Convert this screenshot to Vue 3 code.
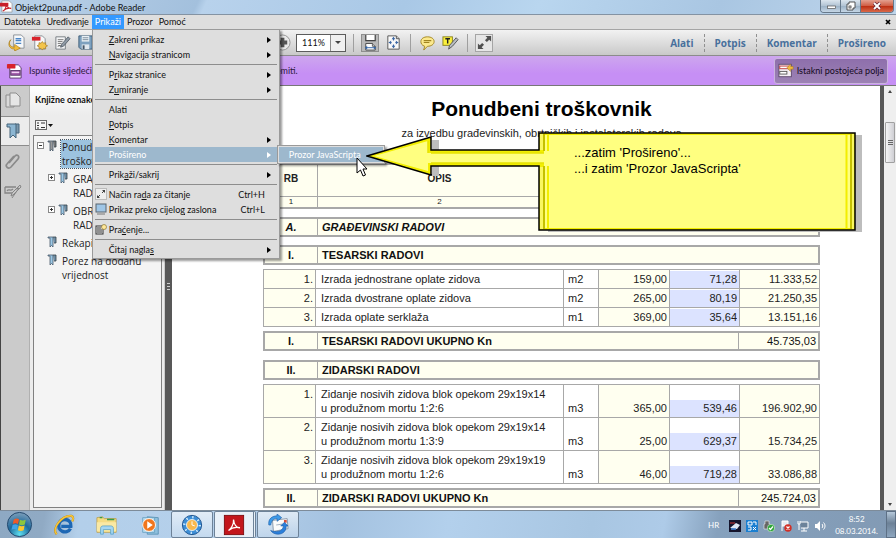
<template>
    <div class="window">
        <header class="titlebar">
            <svg class="title-icon" viewBox="0 0 14 14">
                <path d="M2 1h8l3 3v9H2z" fill="#fff" stroke="#999" stroke-width=".8" />
                <rect x="0" y="3" width="9" height="4" fill="#c8202a" />
                <path d="M3 12c3-2 4-5 3-8 1 4 3 5 6 5-4-1-7 1-9 3z" fill="none" stroke="#c8202a" stroke-width="1.2" />
            </svg>
            <h1 class="title-text">Objekt2puna.pdf - Adobe Reader</h1>
            <div class="window-buttons">
                <button class="win-btn" aria-label="Minimize">
                    <svg viewBox="0 0 12 10"><rect x="2.5" y="5" width="8" height="2.5" fill="#fff" stroke="#555" stroke-width=".7" /></svg>
                </button>
                <button class="win-btn" aria-label="Restore">
                    <svg viewBox="0 0 12 10"><path d="M4 1h6v6H8v2H2V3h2z" fill="#fff" stroke="#444" stroke-width=".9" /><rect x="4" y="5" width="2" height="2" fill="none" stroke="#444" stroke-width=".8" /></svg>
                </button>
                <button class="win-btn win-close" aria-label="Close">
                    <svg viewBox="0 0 12 10"><path d="M3 2l6 6M9 2l-6 6" stroke="#623" stroke-width="3.2" /><path d="M3 2l6 6M9 2l-6 6" stroke="#fff" stroke-width="1.9" /></svg>
                </button>
            </div>
        </header>

        <nav class="menubar">
            <div v-for="item in menus" :key="item" class="menubar-item">
                <button class="menubar-btn" :class="{ active: item === openMenu }" @click="openMenu = item">{{ item }}</button>
                <ul v-if="item === 'Prikaži' && openMenu === item" class="dropdown">
                    <li v-for="(entry, i) in viewMenu" :key="i" :class="{ 'menu-sep': !entry.label, 'menu-row': entry.label, selected: entry.selected }">
                        <template v-if="entry.label">
                            <svg v-if="entry.icon === 'read'" class="menu-icon" viewBox="0 0 12 12">
                                <rect x=".5" y=".5" width="11" height="11" fill="#eee" stroke="#bbb" />
                                <path d="M2 10V7l3 3zM10 2v3L7 2z" fill="#444" /><path d="M3 9l2-2M9 3L7 5" stroke="#444" />
                            </svg>
                            <svg v-else-if="entry.icon === 'screen'" class="menu-icon" viewBox="0 0 12 12">
                                <rect x="1" y="1" width="10" height="8" fill="#9fc6e6" stroke="#59646e" /><path d="M2 11h8" stroke="#777" />
                            </svg>
                            <svg v-else-if="entry.icon === 'track'" class="menu-icon" viewBox="0 0 12 12">
                                <rect x="1" y="3" width="7" height="8" fill="#eee" stroke="#333" /><path d="M2 5h4M2 7h5M2 9h5" stroke="#333" />
                                <circle cx="9" cy="4" r="2.5" fill="#ffe89a" stroke="#8a7430" stroke-width=".7" />
                            </svg>
                            <button class="menu-btn">
                                <span class="menu-label">{{ entry.label[0] }}<u>{{ entry.label[1] }}</u>{{ entry.label[2] }}</span>
                                <span v-if="entry.key" class="menu-key">{{ entry.key }}</span>
                                <span v-if="entry.sub" class="menu-arrow"></span>
                            </button>
                            <div v-if="entry.selected" class="submenu">
                                <button class="submenu-btn">Prozor JavaScripta</button>
                            </div>
                        </template>
                    </li>
                </ul>
            </div>
            <button class="doc-close" aria-label="Close document">
                <svg viewBox="0 0 6 6"><path d="M1 1l4 4M5 1L1 5" stroke="#000" stroke-width="1.7" /></svg>
            </button>
        </nav>

        <div class="toolbar">
            <div class="tools tools-file">
                <button class="tool" aria-label="Otvori">
                    <svg viewBox="0 0 18 18">
                        <path d="M6 1h8l3 3v11H6z" fill="#f6f8fa" stroke="#8a9097" />
                        <path d="M8 5h6M8 7h6M8 10h6" stroke="#4a86c8" stroke-width="1.4" />
                        <path d="M3 6c-3 4-1 8 4 8v-3l6 4-6 3v-2C1 16-1 10 3 6z" fill="#f2bd3c" stroke="#a87b16" stroke-width=".7" />
                    </svg>
                </button>
                <button class="tool" aria-label="Stvori PDF">
                    <svg viewBox="0 0 18 18">
                        <path d="M4 2h8l3 3v11H4z" fill="#f8f8f8" stroke="#8a9097" />
                        <rect x="1" y="3" width="9" height="4" fill="#d8232b" />
                        <path d="M12 8l1.300 1.800 2.200-.6v2.300l2 1-2 1v2.300l-2.200-.6L12 17l-1.300-1.800-2.200.6v-2.300l-2-1 2-1V9.200l2.200.6z" fill="#f4c54b" stroke="#a8802a" stroke-width=".8" />
                    </svg>
                </button>
                <button class="tool" aria-label="Potpiši">
                    <svg viewBox="0 0 18 18">
                        <path d="M2 3h10v13H2z" fill="#f4f5f6" stroke="#777d83" />
                        <path d="M4 6h6M4 8h5M4 10h4" stroke="#777" /><path d="M4 13c2-2 3 1 5-1" fill="none" stroke="#444" />
                        <path d="M15 3l2 2-7 8-3 1 1-3z" fill="#8f9aa5" stroke="#48525b" stroke-width=".8" />
                    </svg>
                </button>
                <button class="tool" aria-label="Spremi">
                    <svg viewBox="0 0 18 18">
                        <path d="M2 2h14v14H4l-2-2z" fill="#7da1bf" stroke="#3c5c78" />
                        <rect x="5" y="2" width="8" height="6" fill="#e9f0f5" /><path d="M6 4h6M6 6h6" stroke="#7a8c9c" />
                        <rect x="5" y="11" width="8" height="5" fill="#dfe7ee" /><rect x="6" y="12" width="2" height="4" fill="#456" />
                    </svg>
                </button>
            </div>
            <div class="tools tools-zoom">
                <button class="tool" aria-label="Povećaj">
                    <svg viewBox="0 0 18 18"><circle cx="9" cy="9" r="8" fill="#e8e8e8" stroke="#929292" /><path d="M9 4v10M4 9h10" stroke="#555" stroke-width="4" /></svg>
                </button>
                <div class="zoom-box">
                    <input class="zoom-input" v-model="zoom" aria-label="Zumiranje" />
                    <button class="zoom-drop" aria-label="Vrijednosti zumiranja"></button>
                </div>
            </div>
            <div class="tools tools-fit">
                <button class="tool pressed" aria-label="Prilagodi širini">
                    <svg viewBox="0 0 18 18">
                        <path d="M4 1v6h10V1" fill="#fff" stroke="#444" stroke-width="1.300" /><path d="M4 17V10h7l3 3v4z" fill="#fff" stroke="#444" />
                        <path d="M4 14.500h10" stroke="#3566a8" /><path d="M3 14.500l2.500-2v4zM15 14.500l-2.500-2v4z" fill="#3566a8" />
                        <path d="M11 10v3h3" fill="#ccc" stroke="#444" stroke-width=".8" />
                    </svg>
                </button>
                <button class="tool" aria-label="Cijela stranica">
                    <svg viewBox="0 0 18 18">
                        <path d="M3 2h9l3 3v11H3z" fill="#fafafa" stroke="#555" /><path d="M12 2v3h3" fill="#ccc" stroke="#555" />
                        <path d="M9 4v3M9 11v3M4 9h3M11 9h3" stroke="#3a66a4" stroke-width="1.200" />
                        <path d="M7 5.500h4L9 3zM7 12.500h4L9 15zM6.500 7v4L4 9zM11.500 7v4L14 9z" fill="#3a66a4" />
                    </svg>
                </button>
            </div>
            <div class="tools tools-note">
                <button class="tool" aria-label="Komentar">
                    <svg viewBox="0 0 18 18"><path d="M9 3c4 0 7 2 7 5s-3 5-7 5l-4 4 1-4c-3-1-4-3-4-5 0-3 3-5 7-5z" fill="#fbe98e" stroke="#a08420" /><path d="M5 7h8M5 9h6" stroke="#a08420" stroke-width="1.200" /></svg>
                </button>
                <button class="tool" aria-label="Istakni tekst">
                    <svg viewBox="0 0 18 18">
                        <rect x="1" y="3" width="10" height="9" fill="#fbf03c" stroke="#8b8420" /><path d="M3.500 5h5M6 5v5" stroke="#222" stroke-width="1.500" />
                        <path d="M15 4l2 2-6 7-4 3 1-4z" fill="#b9bec3" stroke="#555" />
                    </svg>
                </button>
            </div>
            <div class="tools tools-read">
                <button class="tool framed" aria-label="Način rada za čitanje">
                    <svg viewBox="0 0 18 18"><path d="M2 16v-6l2 2 2.500-2.500 2 2L6 14l2 2zM16 2v6l-2-2-2.500 2.500-2-2L12 4l-2-2z" fill="#505050" /></svg>
                </button>
            </div>
            <div class="panes">
                <button v-for="pane in panes" :key="pane" class="pane-btn">{{ pane }}</button>
            </div>
        </div>

        <div class="formbar">
            <svg class="form-icon" viewBox="0 0 18 18">
                <path d="M4 3h9l3 3v11H4z" fill="#fff" stroke="#5b3a6b" />
                <rect x="1" y="2" width="9" height="5" rx="1" fill="#d8232b" />
                <rect x="5" y="9" width="10" height="5" fill="#a05aa8" stroke="#5b3a6b" /><path d="M6 11h8" stroke="#f1d5f4" stroke-width="1.500" />
            </svg>
            <p class="form-text">Ispunite sljedeći obrazac. Podatke iz tog obrasca ne možete spremiti.</p>
            <button class="highlight-btn">
                <svg viewBox="0 0 18 16">
                    <rect x="1" y="1" width="14" height="14" fill="#f4eef4" stroke="#5a4668" />
                    <rect x="2" y="3" width="10" height="3" fill="#fff" stroke="#b33" /><rect x="2" y="9" width="8" height="3" fill="#fff" stroke="#555" />
                    <path d="M10 5l4-4v2.500h3v3h-3V9z" fill="#f0b840" stroke="#a87a20" stroke-width=".6" />
                </svg>
                Istakni postojeća polja
            </button>
        </div>

        <main class="workspace">
            <div class="rail">
                <button class="rail-btn" aria-label="Minijature stranica">
                    <svg viewBox="0 0 18 18"><path d="M2 3h8v12H2z" fill="#d9d9d9" stroke="#8d8d8d" /><path d="M6 1h6l4 4v9H6z" fill="#e6e6e6" stroke="#8d8d8d" /></svg>
                </button>
                <button class="rail-btn current" aria-label="Knjižne oznake">
                    <svg viewBox="0 0 18 18"><path d="M11 2h4v9h-3" fill="#7a98ad" stroke="#46647a" /><path d="M3 2h9v14l-3-3-3 3V5H3z" fill="#8cb6d2" stroke="#46647a" /></svg>
                </button>
                <button class="rail-btn" aria-label="Privici">
                    <svg viewBox="0 0 18 18"><path d="M5 11l6-7c2-2 5 0 3 3l-7 8c-3 3-6-1-4-3l7-8" fill="none" stroke="#8a8a8a" stroke-width="1.700" /></svg>
                </button>
                <button class="rail-btn" aria-label="Potpisi">
                    <svg viewBox="0 0 18 18"><path d="M1 5h11M1 5v6h8M3 9c2-3 3 1 6-2" fill="none" stroke="#858585" stroke-width="1.300" /><path d="M16 3l1 2-8 8-2 1 1-3zM12 7l3-1-7 10" fill="#c8c8c8" stroke="#858585" /></svg>
                </button>
            </div>
            <aside class="bookmarks">
                <h2 class="bookmarks-title">Knjižne oznake</h2>
                <div class="bookmarks-tools">
                    <button class="options-btn" aria-label="Mogućnosti">
                        <svg viewBox="0 0 18 12"><rect x=".5" y="1.500" width="11" height="9" fill="#f5f5f5" stroke="#666" /><path d="M2 4h2M2 6.500h2M2 9h2" stroke="#333" /><path d="M6 4h4M6 8.500h4" stroke="#333" /><path d="M13 5h5l-2.500 3z" fill="#111" /></svg>
                    </button>
                </div>
                <ul class="tree">
                    <li v-for="(node, i) in bookmarks" :key="i" class="node" :class="'level-' + node.level">
                        <span class="twist">
                            <svg v-if="node.toggle" viewBox="0 0 8 8"><rect x=".5" y=".5" width="6" height="6" fill="#fff" stroke="#888" /><path :d="node.toggle === '+' ? 'M2 3.500h3M3.500 2v3' : 'M2 3.500h3'" stroke="#333" /></svg>
                        </span>
                        <svg class="node-icon" viewBox="0 0 10 12">
                            <path d="M6 1h3v6H7" :fill="i ? '#6f8fa6' : '#777'" stroke="#333f48" stroke-width=".8" />
                            <path d="M1 1h5v10L4.500 9.500 3 11V2H1z" :fill="i ? '#9cc9e6' : '#999'" stroke="#46586a" stroke-width=".8" />
                        </svg>
                        <a href="#" class="node-text" :class="{ current: i === 0 }" @click.prevent>
                            <span v-for="line in node.lines" :key="line">{{ line }}</span>
                        </a>
                    </li>
                </ul>
            </aside>
            <div class="splitter"><i></i><i></i><i></i></div>

            <article class="page">
                <h2 class="page-title">Ponudbeni troškovnik</h2>
                <p class="page-sub">za izvedbu građevinskih, obrtničkih i instalaterskih radova</p>

                <table class="grid head-grid">
                    <colgroup><col class="c-no" /><col /></colgroup>
                    <tbody>
                        <tr><th>RB</th><th class="opis">OPIS</th></tr>
                        <tr class="nums"><td>1</td><td class="opis">2</td></tr>
                    </tbody>
                </table>

                <table v-for="(block, i) in blocks" :key="i" class="grid" :class="block.type">
                    <colgroup>
                        <col class="c-no" /><col />
                        <template v-if="block.rows"><col class="c-unit" /><col class="c-qty" /><col class="c-price" /></template>
                        <col v-if="block.rows || block.sum" class="c-sum" />
                    </colgroup>
                    <tbody v-if="block.rows">
                        <tr v-for="(row, r) in block.rows" :key="r">
                            <td class="no">{{ r + 1 }}.</td>
                            <td class="desc">{{ row[0] }}<template v-if="row[5]"><br />{{ row[5] }}</template></td>
                            <td class="unit">{{ row[1] }}</td>
                            <td class="num">{{ row[2] }}</td>
                            <td class="field"><input v-model="row[3]" :aria-label="'Cijena: ' + row[0]" /></td>
                            <td class="num">{{ row[4] }}</td>
                        </tr>
                    </tbody>
                    <tbody v-else>
                        <tr>
                            <th class="rank" :class="{ italic: block.italic }">{{ block.no }}</th>
                            <th class="name" :class="{ italic: block.italic }">{{ block.name }}</th>
                            <td v-if="block.sum" class="num">{{ block.sum }}</td>
                        </tr>
                    </tbody>
                </table>
            </article>

            <div class="page-edge"></div>
            <div class="scrollbar">
                <button class="scroll-btn up" aria-label="Gore"></button>
                <div class="scroll-track"><div class="thumb"><i></i><i></i><i></i></div></div>
                <button class="scroll-btn down" aria-label="Dolje"></button>
            </div>
        </main>

        <footer class="taskbar">
            <button class="task orb" aria-label="Start">
                <svg viewBox="0 0 28 28">
                    <defs><radialGradient id="orb" cx=".5" cy=".9" r=".9"><stop offset="0" stop-color="#5fe0f0" /><stop offset=".5" stop-color="#1d6a9c" /><stop offset="1" stop-color="#7f9fbb" /></radialGradient></defs>
                    <circle cx="14" cy="14" r="12.500" fill="url(#orb)" stroke="#1f466b" />
                    <path d="M8 9c2-1.500 4-1.500 5.500-.5l-1 5c-2-1-3.500-1-5.500 0z" fill="#ee5a28" /><path d="M14.500 9c2 1 3.500 1 6 0l-1 5c-2 1-4 1-6 0z" fill="#8cc63e" />
                    <path d="M6.800 14.500c2-1 3.500-1 5.500 0l-1 5c-2-1-3.500-1-5.500 0z" fill="#3fa4e8" /><path d="M13.300 15c2 1 4 1 6 0l-1 5c-2 1-4 1-6 0z" fill="#fdc72e" />
                </svg>
            </button>
            <button class="task" aria-label="Internet Explorer">
                <svg viewBox="0 0 24 24">
                    <path d="M19 16c-1.500 3.500-6 4.500-9.500 2.500C4 15 6 6 13 6c5 0 7 4 6.500 7.500H9" fill="none" stroke="#1d67b4" stroke-width="3.600" />
                    <path d="M4 22C-2 16 10 1 20 2c3 1 2 4 1 6" fill="none" stroke="#b98a1a" stroke-width="2.400" />
                    <path d="M4 22C-2 16 10 1 20 2c3 1 2 4 1 6" fill="none" stroke="#f7c63a" stroke-width="1.700" />
                </svg>
            </button>
            <button class="task" aria-label="Explorer">
                <svg viewBox="0 0 24 24">
                    <path d="M1 4l6-1 2 2h13v15H1z" fill="#f5dc83" stroke="#b99a45" stroke-width=".8" /><path d="M4 4h3M12 6h8" stroke="#3a9c4a" stroke-width="1.500" />
                    <path d="M1 9h21v10H1z" fill="#fae9a4" /><path d="M5 22v-6c0-2 1-3 3-3h8c2 0 3 1 3 3v6h-3v-5H8v5z" fill="#a4d6f2" stroke="#4f9cc8" stroke-width=".8" />
                </svg>
            </button>
            <button class="task" aria-label="Media Player">
                <svg viewBox="0 0 24 24">
                    <path d="M9 3l12 1v18H9z" fill="#8fc0de" stroke="#4d88ab" stroke-width=".8" /><path d="M4 4h13v16H4z" fill="#b9dcf0" stroke="#5c98ba" stroke-width=".8" />
                    <circle cx="11" cy="12" r="7" fill="#f0761d" stroke="#fff" /><path d="M9 8v8l6-4z" fill="#fff" />
                </svg>
            </button>
            <button class="task running" aria-label="Budilica">
                <svg viewBox="0 0 24 24">
                    <circle cx="12" cy="12" r="10.500" fill="#3d8ed6" stroke="#174e8a" /><circle cx="12" cy="12" r="8.500" fill="none" stroke="#d4ebfb" stroke-dasharray="1.500 5.170" stroke-width="2.500" />
                    <circle cx="12" cy="12" r="6" fill="#f9b84c" stroke="#e8f3fb" /><path d="M12 8v4l3 1" stroke="#fff" fill="none" />
                </svg>
            </button>
            <button class="task running stacked" aria-label="Adobe Reader">
                <svg viewBox="0 0 24 24">
                    <rect x="1.500" y="1.500" width="21" height="21" fill="#c3161c" stroke="#7d0c10" />
                    <path d="M6 18c3-2 6-7 5.500-12 .5 5 3 9 7 9-4-.8-9 0-12.500 3z" fill="none" stroke="#fff" stroke-width="1.400" />
                </svg>
            </button>
            <button class="task running" aria-label="Pošta">
                <svg viewBox="0 0 24 24">
                    <path d="M6 7l16-2 1 11-16 3z" fill="#fbfbfb" stroke="#8796a6" /><path d="M10 12l7-1" stroke="#9ab" /><rect x="18.500" y="6.500" width="3" height="3" fill="#d8503a" />
                    <path d="M2 12C1 5 6 2 11 2V0l5 4-5 4V5C7 5 5 7 4 12z" fill="#3c9ae8" stroke="#1a5ca8" stroke-width=".7" />
                    <path d="M18 13h-3l4-4 4 4h-2c0 5-3 9-9 9-3 0-6-1-8-4 5 2 13 2 14-5z" fill="#2b7fdb" stroke="#1a5ca8" stroke-width=".7" />
                </svg>
            </button>
            <div class="tray">
                <span class="lang">HR</span>
                <div class="tray-icons">
                    <svg viewBox="0 0 12 12"><rect width="12" height="12" fill="#14142c" /><path d="M1 8l6-5 4 2-3 4z" fill="#dfe6f4" /><path d="M1 3h5" stroke="#c33" /><path d="M2 9h5" stroke="#4a8be0" stroke-width="1.500" /></svg>
                    <svg viewBox="0 0 12 12"><rect width="12" height="12" fill="#1b7fd0" /><path d="M2 2h4v3H2zM7 2h3v3M2 7h3v3H2M7 7l3 3M7 10l3-3" stroke="#fff" fill="none" /></svg>
                    <svg viewBox="0 0 12 12"><path d="M2 1h4v3h1v5H1V4h1z" fill="#666" stroke="#eee" stroke-width=".6" /><circle cx="8" cy="8" r="3.700" fill="#2fa53a" stroke="#fff" stroke-width=".5" /><path d="M6 8l1.500 1.500L10 6.500" stroke="#fff" fill="none" stroke-width="1.200" /></svg>
                    <svg viewBox="0 0 12 12"><path d="M2 1v10M2 1h6v5H2" fill="#e6ebf0" stroke="#fff" /><circle cx="8" cy="8" r="3.700" fill="#d22f25" /><path d="M6.500 6.500l3 3M9.500 6.500l-3 3" stroke="#fff" stroke-width="1.200" /></svg>
                    <svg viewBox="0 0 12 12"><path d="M3 2h8v6H4M7 8v3M4 11h6" fill="#6c8299" stroke="#fff" /><path d="M1 1v3h2V1M2 4v6" fill="none" stroke="#fff" /></svg>
                    <svg viewBox="0 0 12 12"><path d="M1 4h2l3-3v10L3 8H1z" fill="#fff" /><path d="M8 4c1 1 1 3 0 4M9.500 2.500c2 2 2 5 0 7" fill="none" stroke="#fff" /></svg>
                </div>
                <div class="clock"><span>8:52</span><span>08.03.2014.</span></div>
                <button class="show-desktop" aria-label="Prikaži radnu površinu"></button>
            </div>
        </footer>

        <div class="callout">
            <svg class="callout-shape" viewBox="0 0 498 102">
                <path d="M66 8h7v36h-7zM182 3h314v97H182z" fill="#bdbdbd" />
                <path d="M1 24L65 5v13h108V1h316v97H173V34H65v9z" fill="#f2ee00" stroke="#000" stroke-width="1.500" />
                <path d="M8 24l54-15v12h116V3h306v93H178V31H62v8z" fill="#ffff80" />
                <path d="M65 21h113M65 31h113M62 9v12" stroke="#e6e200" stroke-width="1.500" />
                <path d="M175.500 2v16M175.500 35v62M486.500 2v95" stroke="#f9f760" stroke-width="3" />
                <path d="M178 2v17M178 34v63M485 2v95" stroke="#c4c000" stroke-width="2" />
                <path d="M182 3v16M182 34v62M480.500 3v93" stroke="#f2ee00" stroke-width="2" />
            </svg>
            <p class="callout-text">...zatim 'Prošireno'...<br />...i zatim 'Prozor JavaScripta'</p>
        </div>
        <svg class="cursor" viewBox="0 0 12 20"><path d="M1 1v15l3.500-3 2.500 6 2.500-1-2.500-6H11z" fill="#fff" stroke="#000" /></svg>
    </div>
</template>

<script setup>
import { ref } from 'vue';

const menus = ['Datoteka', 'Uređivanje', 'Prikaži', 'Prozor', 'Pomoć'];
const openMenu = ref('Prikaži');
const zoom = ref('111%');
const panes = ['Alati', 'Potpis', 'Komentar', 'Prošireno'];

// label is split around the mnemonic letter, an empty entry is a separator
const viewMenu = [
    { label: ['', 'Z', 'akreni prikaz'], sub: true },
    { label: ['', 'N', 'avigacija stranicom'], sub: true },
    {},
    { label: ['P', 'r', 'ikaz stranice'], sub: true },
    { label: ['Z', 'u', 'miranje'], sub: true },
    {},
    { label: ['Alati', '', ''] },
    { label: ['', 'P', 'otpis'] },
    { label: ['', 'K', 'omentar'], sub: true },
    { label: ['Prošireno', '', ''], sub: true, selected: true },
    {},
    { label: ['Prik', 'a', 'ži/sakrij'], sub: true },
    {},
    { label: ['Način ra', 'd', 'a za čitanje'], key: 'Ctrl+H', icon: 'read' },
    { label: ['Prikaz preko cijelo', 'g', ' zaslona'], key: 'Ctrl+L', icon: 'screen' },
    {},
    { label: ['Pra', 'ć', 'enje...'], icon: 'track' },
    {},
    { label: ['Čitaj nagla', 's', ''], sub: true }
];

const bookmarks = [
    { level: 0, toggle: '-', lines: ['Ponudbeni', 'troškovnik'] },
    { level: 1, toggle: '+', lines: ['GRAĐEVINSKI', 'RADOVI'] },
    { level: 1, toggle: '+', lines: ['OBRTNIČKI', 'RADOVI'] },
    { level: 0, lines: ['Rekapitulacija'] },
    { level: 0, lines: ['Porez na dodanu', 'vrijednost'] }
];

// row: description, unit, quantity, price, total, second line
const blocks = ref([
    { type: 'bar', no: 'A.', name: 'GRAĐEVINSKI RADOVI', italic: true },
    { type: 'bar', no: 'I.', name: 'TESARSKI RADOVI' },
    {
        type: 'items',
        rows: [
            ['Izrada jednostrane oplate zidova', 'm2', '159,00', '71,28', '11.333,52'],
            ['Izrada dvostrane oplate zidova', 'm2', '265,00', '80,19', '21.250,35'],
            ['Izrada oplate serklaža', 'm1', '369,00', '35,64', '13.151,16']
        ]
    },
    { type: 'total', no: 'I.', name: 'TESARSKI RADOVI UKUPNO Kn', sum: '45.735,03' },
    { type: 'bar', no: 'II.', name: 'ZIDARSKI RADOVI' },
    {
        type: 'items tall',
        rows: [
            ['Zidanje nosivih zidova blok opekom 29x19x14', 'm3', '365,00', '539,46', '196.902,90', 'u produžnom mortu 1:2:6'],
            ['Zidanje nosivih zidova blok opekom 29x19x14', 'm3', '25,00', '629,37', '15.734,25', 'u produžnom mortu 1:3:9'],
            ['Zidanje nosivih zidova blok opekom 29x19x19', 'm3', '46,00', '719,28', '33.086,88', 'u produžnom mortu 1:2:6']
        ]
    },
    { type: 'total', no: 'II.', name: 'ZIDARSKI RADOVI UKUPNO Kn', sum: '245.724,03' }
]);
</script>

<style>
body {
    margin: 0;
    background: #fff;
}
</style>

<style scoped>
* {
    box-sizing: border-box;
}

.window {
    position: relative;
    display: flex;
    flex-direction: column;
    height: 100vh;
    overflow: hidden;
    font-family: Lato, "Open Sans", sans-serif;
    font-size: 9px;
    color: #111;
}

button {
    margin: 0;
    padding: 0;
    border: 0;
    background: none;
    font: inherit;
    color: inherit;
    white-space: nowrap;
}

input {
    min-width: 0;
    margin: 0;
    border: 0;
    font: inherit;
    color: inherit;
}

svg {
    display: block;
    flex: none;
}

ul {
    margin: 0;
    padding: 0;
    list-style: none;
}

.titlebar {
    display: flex;
    flex: none;
    height: 15px;
    background: linear-gradient(115deg, #bcd3ea 0%, #a3c0dd 22%, #b8d2ec 23%, #a9c8e6 45%, #b9d6ef 60%, #a9c6e2 80%, #bfd6ec 100%);
    border-bottom: 1px solid #8493a3;
}

.title-icon {
    width: 13px;
    height: 13px;
}

.title-text {
    flex: 1;
    margin: 0 0 0 2px;
    font-size: 9px;
    font-weight: 400;
    line-height: 15px;
}

.window-buttons {
    display: flex;
    height: 13px;
    margin-right: 2px;
    border: 1px solid #66788a;
    border-top: 0;
    border-radius: 0 0 4px 4px;
    overflow: hidden;
}

.win-btn {
    display: flex;
    align-items: center;
    justify-content: center;
    width: 20px;
    background: linear-gradient(#dbe5ee, #b0c2d3 50%, #9cb2c6 51%, #c5d6e6);
    border-right: 1px solid #66788a;
}

.win-btn svg {
    width: 12px;
    height: 10px;
}

.win-close {
    width: 32px;
    border-right: 0;
    background: linear-gradient(#e3a090, #cf5b42 50%, #bb2e12 51%, #d9694a);
}

.menubar {
    display: flex;
    flex: none;
    height: 15px;
    padding-left: 1px;
    background: #dedede;
    border-bottom: 1px solid #a5a5a5;
}

.menubar-item {
    position: relative;
}

.menubar-btn {
    display: block;
    height: 14px;
    padding: 0 3px;
    line-height: 14px;
}

.menubar-btn.active {
    background: #3399ff;
    color: #fff;
}

.doc-close {
    margin: 0 5px 0 auto;
}

.doc-close svg {
    width: 6px;
    height: 6px;
}

.dropdown {
    position: absolute;
    z-index: 5;
    top: 14px;
    left: 0;
    width: 188px;
    padding: 2px 2px 1px;
    background: #dedede;
    border: 1px solid #9a9a9a;
    box-shadow: 2px 2px 2px rgba(0, 0, 0, 0.4);
}

.menu-row {
    position: relative;
    display: flex;
    height: 15px;
    line-height: 15px;
}

.menu-sep {
    height: 5px;
    border-bottom: 1px solid #8d8d8d;
    margin-bottom: 2px;
    margin-top: -2px;
}

.menu-icon {
    position: absolute;
    left: 0;
    top: 1px;
    width: 12px;
    height: 12px;
}

.menu-btn {
    display: flex;
    flex: 1;
    align-items: center;
    padding: 0 6px 0 14px;
    text-align: left;
}

.menu-label {
    flex: 1;
}

.menu-key {
    margin-right: 6px;
}

.menu-arrow {
    border: 3px solid transparent;
    border-right-width: 0;
    border-left: 4px solid #000;
}

.selected {
    background: #9db8cd;
    color: #fff;
}

.selected .menu-arrow {
    border-left-color: #fff;
}

.submenu {
    position: absolute;
    left: 182px;
    top: -2px;
    width: 108px;
    padding: 1px;
    background: #dedede;
    border: 1px solid #9a9a9a;
    box-shadow: 2px 2px 2px rgba(0, 0, 0, 0.4);
}

.submenu-btn {
    display: block;
    width: 100%;
    height: 15px;
    padding-left: 10px;
    background: #9db8cd;
    text-align: left;
    line-height: 15px;
}

.toolbar {
    display: flex;
    flex: none;
    align-items: center;
    height: 26px;
    padding-left: 7px;
    background: linear-gradient(#f2f2f2, #c9c9c9);
    border-bottom: 1px solid #8c8c8c;
}

.tools {
    display: flex;
    flex: none;
    align-items: center;
    gap: 5px;
    padding: 0 8px 0 7px;
    height: 18px;
    border-left: 1px solid #9f9f9f;
}

.tools-file {
    width: 259px;
    padding: 0;
    border-left: 0;
}

.tools-zoom {
    padding-right: 7px;
    border-left: 0;
}

.tool {
    display: flex;
    align-items: center;
    justify-content: center;
    width: 18px;
    height: 18px;
}

.tool svg {
    width: 17px;
    height: 17px;
}

.pressed {
    background: #b9b9b9;
    border: 1px solid #8e8e8e;
}

.framed {
    background: #e6e6e6;
    border: 1px solid #a5a5a5;
}

.zoom-box {
    display: flex;
    width: 50px;
    height: 18px;
    background: #fff;
    border: 1px solid #5c5c5c;
}

.zoom-input {
    flex: 1;
    padding: 0 0 0 5px;
    background: none;
}

.zoom-drop {
    width: 15px;
    border-left: 1px solid #8c8c8c;
    background: #f0f0f0;
}

.zoom-drop::after {
    content: "";
    display: block;
    width: 0;
    margin: 0 auto;
    border: 3px solid transparent;
    border-top-color: #444;
    border-bottom: 0;
}

.panes {
    display: flex;
    margin-left: auto;
}

.pane-btn {
    height: 18px;
    padding: 0 10px;
    border-left: 1px dashed #909090;
    color: #48709c;
    font-family: "Open Sans", "Noto Sans", sans-serif;
    font-size: 10px;
    font-weight: 700;
}

.pane-btn:first-child {
    border-left: 0;
}

.formbar {
    display: flex;
    flex: none;
    align-items: center;
    height: 30px;
    padding: 0 8px 0 6px;
    background: linear-gradient(#cda6ee, #c68ff5 60%);
    border-bottom: 1px solid #777;
}

.form-icon {
    width: 17px;
    height: 17px;
}

.form-text {
    flex: 1;
    margin: 0 0 0 6px;
    color: #2c1a3a;
}

.highlight-btn {
    display: flex;
    align-items: center;
    gap: 3px;
    height: 26px;
    padding: 0 3px;
    background: linear-gradient(#8e6fac, #9c82b4);
    border: 1px solid #c9b4dc;
    border-radius: 3px;
    color: #140a1c;
}

.highlight-btn svg {
    width: 16px;
    height: 15px;
}

.workspace {
    display: flex;
    flex: 1;
    min-height: 0;
}

.rail {
    flex: none;
    width: 30px;
    background: #cbcbcb;
    border-left: 1px solid #444;
    border-right: 1px solid #b0b0b0;
}

.rail-btn {
    display: flex;
    align-items: center;
    justify-content: center;
    width: 28px;
    height: 30px;
    padding-right: 4px;
}

.rail-btn.current {
    background: #ececec;
    border-top: 1px solid #8c8c8c;
    border-bottom: 1px solid #8c8c8c;
}

.rail-btn svg {
    width: 18px;
    height: 18px;
}

.bookmarks {
    display: flex;
    flex: none;
    flex-direction: column;
    width: 135px;
    padding: 0 2px 2px 3px;
    background: #ececec;
    border-right: 1px solid #ccc;
}

.bookmarks-title {
    margin: 0 -2px 0 -3px;
    padding-left: 5px;
    height: 29px;
    background: linear-gradient(#fff, #ececec);
    font-size: 9px;
    line-height: 28px;
    white-space: nowrap;
}

.bookmarks-tools {
    display: flex;
    align-items: center;
    height: 20px;
    padding-left: 2px;
}

.options-btn svg {
    width: 18px;
    height: 12px;
}

.tree {
    flex: 1;
    padding: 4px 0 0 3px;
    background: #f4f4f4;
    border: 1px solid #808080;
    overflow: hidden;
}

.node {
    display: flex;
    align-items: flex-start;
    margin-bottom: 4px;
    font-family: "Open Sans", "Noto Sans", sans-serif;
    font-size: 10px;
    line-height: 14px;
}

.level-1 {
    margin-left: 11px;
}

.twist {
    width: 10px;
    padding-top: 2px;
}

.twist svg {
    width: 8px;
    height: 8px;
}

.node-icon {
    width: 10px;
    height: 12px;
    margin-right: 4px;
}

.node-text {
    display: flex;
    flex-direction: column;
    padding: 0 1px;
    color: #222;
    text-decoration: none;
    white-space: nowrap;
}

.node-text.current {
    background: #9cc3e0;
    outline: 1px dotted #456;
}

.splitter {
    display: flex;
    flex: none;
    flex-direction: column;
    justify-content: center;
    align-items: center;
    gap: 2px;
    width: 7px;
    padding-bottom: 24px;
    background: #585858;
}

.splitter i {
    width: 3px;
    height: 1px;
    background: #ccc;
}

.page {
    flex: 1;
    min-width: 0;
    padding: 11px 60px 0 91px;
    background: #fff;
    font-family: "Liberation Sans", Arial, sans-serif;
    font-size: 11px;
    color: #222;
}

.page-title {
    margin: 0;
    color: #000;
    font-size: 21px;
    line-height: 24px;
    text-align: center;
}

.page-sub {
    margin: 4px 0 22px;
    font-size: 11px;
    line-height: 16px;
    text-align: center;
}

.grid {
    width: 100%;
    table-layout: fixed;
    border-collapse: separate;
    border-spacing: 0;
    background: #fffff0;
    border: 2px solid #a8a8a8;
    line-height: 14px;
}

.grid th,
.grid td {
    padding: 0;
}

.c-no {
    width: 52px;
}

.c-unit {
    width: 35px;
}

.c-qty {
    width: 71px;
}

.c-price {
    width: 70px;
}

.c-sum {
    width: 80px;
}

.head-grid {
    margin-bottom: 8px;
}

.grid.head-grid th {
    height: 32px;
    padding-bottom: 4px;
    border-bottom: 1px solid #a8a8a8;
    font-size: 10px;
}

.head-grid .nums td {
    height: 10px;
    font-size: 8px;
    line-height: 10px;
    text-align: center;
}

.grid.head-grid .opis {
    padding-right: 257px;
    border-left: 1px solid #a8a8a8;
}

.bar {
    margin-bottom: 8px;
}

.bar + .items {
    margin-top: -4px;
}

.items {
    margin-bottom: 4px;
    border-width: 1px 0 0 1px;
}

.total {
    margin-bottom: 9px;
}

.rank,
.name,
.total .num {
    height: 16px;
    color: #111;
}

.name {
    border-left: 1px solid #a8a8a8;
    text-align: left;
}

.grid .name {
    padding-left: 4px;
}

.grid .desc {
    padding-left: 5px;
}

.italic {
    font-style: italic;
}

.total .num {
    border-left: 1px solid #a8a8a8;
}

.items td {
    height: 19px;
    border-right: 1px solid #a8a8a8;
    border-bottom: 1px solid #a8a8a8;
    vertical-align: middle;
}

.tall td {
    height: 33px;
}

.items.tall td {
    padding-bottom: 2px;
    vertical-align: bottom;
}

.items .no,
.items.tall .no {
    padding-right: 2px;
    text-align: right;
    vertical-align: top;
    line-height: 18px;
}

.items .desc,
.items .unit,
.items .field {
    background: #fff;
}

.items .unit {
    padding-left: 4px;
}

.grid .num {
    padding-right: 2px;
    text-align: right;
}

.items .field,
.items.tall .field {
    padding: 0;
    vertical-align: bottom;
}

.field input {
    display: block;
    width: 100%;
    height: 17px;
    padding: 0 2px 1px 0;
    background: #dce3ff;
    text-align: right;
}

.page-edge {
    flex: none;
    width: 4px;
    background: #585858;
}

.scrollbar {
    display: flex;
    flex: none;
    flex-direction: column;
    width: 12px;
    background: #efefef;
}

.scroll-btn {
    display: flex;
    align-items: center;
    justify-content: center;
    height: 11px;
}

.scroll-btn::after {
    content: "";
    border: 2px solid transparent;
}

.up::after {
    border-top: 0;
    border-bottom: 3px solid #444;
}

.down::after {
    border-bottom: 0;
    border-top: 3px solid #444;
}

.scroll-track {
    flex: 1;
    padding: 25px 1px 0;
}

.thumb {
    display: flex;
    flex-direction: column;
    align-items: center;
    justify-content: center;
    gap: 1px;
    height: 41px;
    background: linear-gradient(90deg, #f5f5f5, #cfcfd4);
    border: 1px solid #a0a0a0;
    border-radius: 1px;
}

.thumb i {
    width: 5px;
    height: 1px;
    background: #666;
}

.taskbar {
    display: flex;
    flex: none;
    align-items: stretch;
    height: 28px;
    padding-left: 4px;
    background: linear-gradient(100deg, #8ea9c3 0%, #90aac4 5%, #b3cfea 9%, #b5d0eb 25%, #a4c2e0 38%, #b3d0ec 50%, #a8c6e2 66%, #aecbe8 74%, #86a1bd 80%, #829ab4 100%);
    border-top: 1px solid #7d8b99;
}

.task {
    display: flex;
    align-items: center;
    justify-content: center;
    width: 43px;
}

.task svg {
    width: 22px;
    height: 22px;
}

.orb {
    width: 31px;
    margin-right: 7px;
}

.orb svg {
    width: 27px;
    height: 27px;
}

.running {
    width: 42px;
    margin-right: 1px;
    background: linear-gradient(rgba(255, 255, 255, 0.6), rgba(255, 255, 255, 0.2));
    border: 1px solid #6d8298;
    border-radius: 2px;
}

.stacked {
    border-right: 3px double #6d8298;
    background: rgba(255, 255, 255, 0.7);
}

.tray {
    display: flex;
    align-items: center;
    margin-left: auto;
    color: #fff;
    font-size: 8px;
}

.tray-icons {
    display: flex;
    gap: 5px;
    margin: 2px 0 0 10px;
}

.tray-icons svg {
    width: 12px;
    height: 12px;
}

.clock {
    display: flex;
    flex-direction: column;
    align-items: center;
    margin: 0 8px 0 9px;
    line-height: 12px;
}

.show-desktop {
    align-self: stretch;
    width: 10px;
    background: linear-gradient(#b5c8da, #6c8197 45%, #8ea6bf);
    border: 1px solid #5d7085;
}

.callout {
    position: absolute;
    z-index: 10;
    left: 366px;
    top: 132px;
    width: 498px;
    height: 102px;
}

.callout-shape {
    width: 498px;
    height: 102px;
}

.callout-text {
    position: absolute;
    left: 208px;
    top: 13px;
    margin: 0;
    color: #000;
    font: 13px/16px "Liberation Sans", Arial, sans-serif;
}

.cursor {
    position: absolute;
    z-index: 11;
    left: 356px;
    top: 157px;
    width: 12px;
    height: 20px;
}
</style>
